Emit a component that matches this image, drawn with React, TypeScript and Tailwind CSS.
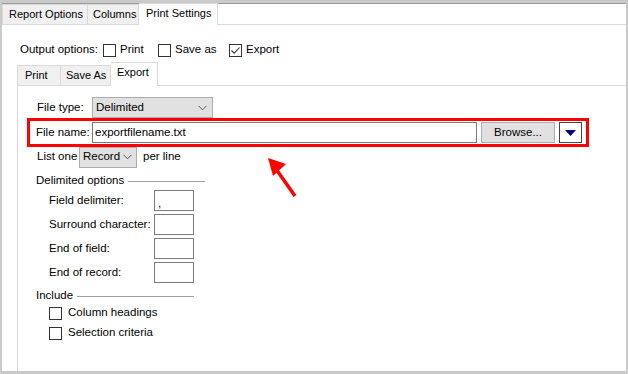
import React from "react";

const font = { fontFamily: '"Liberation Sans", Arial, sans-serif' };

function Box({ checked }: { checked?: boolean }) {
  return (
    <span className="flex h-[13px] w-[13px] shrink-0 items-center justify-center border border-[#333] bg-white">
      {checked && (
        <svg width="11" height="11" viewBox="0 0 11 11">
          <path d="M1.5 5.5 L4.2 8.2 L9.5 2.5" fill="none" stroke="#333" strokeWidth="1.1" />
        </svg>
      )}
    </span>
  );
}

function Chevron() {
  return (
    <svg width="9" height="6" viewBox="0 0 9 6">
      <path d="M0.5 0.8 L4.5 4.8 L8.5 0.8" fill="none" stroke="#555" strokeWidth="1" />
    </svg>
  );
}

function SmallInput({ value }: { value?: string }) {
  return (
    <div className="flex h-[21px] w-[40px] items-end border border-[#7a7a7a] bg-white pb-[1px] pl-[3px] leading-none">
      {value}
    </div>
  );
}

export default function App() {
  return (
    <div
      className="relative h-[374px] w-[628px] whitespace-nowrap bg-[#cacaca] pb-[3px] pl-[2px] pr-[2px] pt-[3px] text-[11.5px] text-black"
      style={font}
    >
      <div className="flex h-full flex-col border-t border-[#9a9a9a] bg-white">
        {/* outer tabs */}
        <div className="flex h-[21px] items-end border-b border-[#d9d9d9] text-[11px]">
          <div className="flex h-[20px] w-[86px] items-center border border-b-0 border-[#d9d9d9] bg-[#f0f0f0] pl-[6px]">Report Options</div>
          <div className="flex h-[20px] w-[51px] items-center border border-b-0 border-l-0 border-[#d9d9d9] bg-[#f0f0f0] pl-[5px]">Columns</div>
          <div className="-mb-px flex h-[22px] w-[79px] items-center border border-b-0 border-l-0 border-[#d9d9d9] bg-white pb-[3px] pl-[7px]">Print Settings</div>
        </div>

        <div className="flex flex-1 flex-col pl-[15px]">
          <div className="mt-[16px] flex h-[18px] items-center">
            <span className="ml-[3px] w-[83px]">Output options:</span>
            <Box />
            <span className="ml-[4px] w-[38px]">Print</span>
            <Box />
            <span className="ml-[4px] w-[54px]">Save as</span>
            <Box checked />
            <span className="ml-[4px]">Export</span>
          </div>

          {/* inner tabs */}
          <div className="mt-[4px] flex h-[23px] items-end border-b border-[#d9d9d9] text-[11px]">
            <div className="flex h-[20px] w-[44px] items-center border border-b-0 border-[#d9d9d9] bg-[#f0f0f0] pl-[7px]">Print</div>
            <div className="flex h-[20px] w-[50px] items-center border border-b-0 border-l-0 border-[#d9d9d9] bg-[#f0f0f0] pl-[5px]">Save As</div>
            <div className="-mb-px flex h-[24px] w-[47px] items-center border border-b-0 border-l-0 border-[#d9d9d9] bg-white pb-[4px] pl-[6px]">Export</div>
          </div>

          <div className="relative flex flex-1 flex-col border-l border-[#d9d9d9] pl-[8px]">
            <div className="mt-[11px] flex h-[21px] items-center pl-[11px]">
              <span className="w-[55px]">File type:</span>
              <div className="flex h-[21px] w-[121px] items-center justify-between border border-[#adadad] bg-[#e1e1e1] pl-[3px] pr-[5px]">
                <span>Delimited</span>
                <Chevron />
              </div>
            </div>

            <div className="ml-px flex h-[29px] w-[562px] items-center border-[3px] border-[#ff0000] pl-[6px]">
              <span className="w-[56px]">File name:</span>
              <div className="flex h-[21px] w-[385px] items-center border border-[#7a7a7a] bg-white pl-[2px]">exportfilename.txt</div>
              <div className="ml-[4px] flex h-[21px] w-[74px] items-center justify-center border border-[#adadad] bg-[#e1e1e1]">Browse...</div>
              <div className="ml-[4px] flex h-[21px] w-[23px] items-center justify-center border border-[#444] bg-white">
                <svg width="11" height="6" viewBox="0 0 11 6">
                  <path d="M0 0 H11 L5.5 6 Z" fill="#000080" />
                </svg>
              </div>
            </div>

            <div className="flex h-[20px] items-center pl-[11px]">
              <span className="w-[42px]">List one</span>
              <div className="flex h-[21px] w-[58px] items-center justify-between border border-[#adadad] bg-[#e1e1e1] pl-[3px] pr-[4px]">
                <span>Record</span>
                <Chevron />
              </div>
              <span className="ml-[6px]">per line</span>
            </div>

            <div className="mt-[5px] flex h-[18px] w-[179px] items-center pl-[10px]">
              <span>Delimited options</span>
              <span className="ml-[4px] h-px flex-1 bg-[#a0a0a0]" />
            </div>

            <div className="flex flex-col gap-[3px] pl-[23px]">
              {[
                ["Field delimiter:", ","],
                ["Surround character:", ""],
                ["End of field:", ""],
                ["End of record:", ""],
              ].map(([label, v]) => (
                <div key={label} className="flex h-[21px] items-center">
                  <span className="w-[105px]">{label}</span>
                  <SmallInput value={v} />
                </div>
              ))}
            </div>

            <div className="mt-[4px] flex h-[18px] w-[168px] items-center pl-[10px]">
              <span>Include</span>
              <span className="ml-[4px] h-px flex-1 bg-[#a0a0a0]" />
            </div>
            <div className="-mt-[2px] flex flex-col pl-[23px]">
              <div className="flex h-[20px] items-center">
                <Box />
                <span className="ml-[6px]">Column headings</span>
              </div>
              <div className="flex h-[20px] items-center">
                <Box />
                <span className="ml-[6px]">Selection criteria</span>
              </div>
            </div>
          </div>
        </div>
      </div>

      {/* annotation arrow */}
      <svg className="absolute left-[262px] top-[152px]" width="40" height="50" viewBox="0 0 40 50">
        <line x1="33" y1="44" x2="14" y2="17" stroke="#ff0000" strokeWidth="3.5" />
        <polygon points="6,6 24,12 11,24" fill="#ff0000" />
      </svg>
    </div>
  );
}
